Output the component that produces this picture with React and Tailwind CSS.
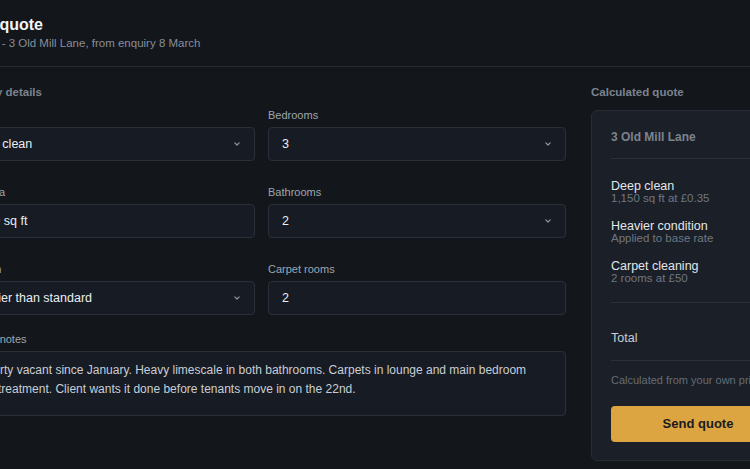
import React from "react";

function Chevron() {
  return (
    <svg width="6" height="4" viewBox="0 0 6 4" fill="none" className="shrink-0">
      <polyline points="0.8,0.8 3,3 5.2,0.8" stroke="#8d95a1" strokeWidth="1.2" strokeLinecap="round" strokeLinejoin="round" />
    </svg>
  );
}

function Field({ label, value, select }) {
  return (
    <div className="flex flex-col">
      <div className="text-[11px] leading-[14px] text-[#9ea6b1] mb-[5px]">{label}</div>
      <div className="h-[34px] flex items-center justify-between pl-[13px] pr-[14px] bg-[#171b23] border border-[#2a2f39] rounded-[4px]">
        <span className="text-[12.5px] text-[#eceef1]">{value}</span>
        {select && <Chevron />}
      </div>
    </div>
  );
}

function LineItem({ name, sub, amount }) {
  return (
    <div className="flex justify-between">
      <div className="flex flex-col">
        <span className="text-[12.5px] leading-[14px] text-[#e3e6ea]">{name}</span>
        <span className="text-[11.5px] leading-[10px] text-[#6f7783]">{sub}</span>
      </div>
      <span className="text-[12.5px] leading-[14px] text-[#e3e6ea]">{amount}</span>
    </div>
  );
}

export default function App() {
  return (
    <div className="w-[750px] h-[469px] overflow-hidden bg-[#13161b] font-['Liberation_Sans',Arial,sans-serif]">
      <div className="w-[890px] -ml-[65px] px-5">
        <header className="pt-[15px] pb-[15px] border-b border-[#262a33]">
          <h1 className="text-[16px] leading-[20px] font-bold text-[#f3f4f6]">Build quote</h1>
          <p className="text-[11.5px] leading-[16px] text-[#878e99]">Jan Hart - 3 Old Mill Lane, from enquiry 8 March</p>
        </header>

        <main className="flex gap-[25px] pt-[18px]">
          <section className="w-[611px] flex flex-col">
            <div className="text-[11.5px] leading-[14px] font-bold text-[#7b838e] mb-[9px]">Property details</div>
            <div className="grid grid-cols-[300px_298px] gap-x-[13px] gap-y-[24px]">
              <Field label="Service" value="Deep clean" select />
              <Field label="Bedrooms" value="3" select />
              <Field label="Floor area" value="1,150 sq ft" />
              <Field label="Bathrooms" value="2" select />
              <Field label="Condition" value="Heavier than standard" select />
              <Field label="Carpet rooms" value="2" />
            </div>
            <div className="mt-[17px] flex flex-col">
              <div className="text-[11px] leading-[14px] text-[#9ea6b1] mb-[5px]">Property notes</div>
              <div className="h-[65px] px-[12px] py-[9px] bg-[#171b23] border border-[#2a2f39] rounded-[4px] text-[12px] leading-[19px] text-[#c9ced6]">
                Property vacant since January. Heavy limescale in both bathrooms. Carpets in lounge and main bedroom need treatment. Client wants it done before tenants move in on the 22nd.
              </div>
            </div>
          </section>

          <aside className="w-[214px] flex flex-col">
            <div className="text-[11.5px] leading-[14px] font-bold text-[#7b838e] mb-[11px]">Calculated quote</div>
            <div className="bg-[#1b1f27] border border-[#262b34] rounded-[6px] px-[19px]">
              <div className="pt-[18px] pb-[13px] border-b border-[#2a2f38] text-[12px] leading-[16px] font-bold text-[#7b838e]">
                3 Old Mill Lane
              </div>
              <div className="pt-[20px] pb-[19px] flex flex-col gap-[16px] border-b border-[#2a2f38]">
                <LineItem name="Deep clean" sub="1,150 sq ft at £0.35" amount="£403" />
                <LineItem name="Heavier condition" sub="Applied to base rate" amount="£60" />
                <LineItem name="Carpet cleaning" sub="2 rooms at £50" amount="£100" />
              </div>
              <div className="h-[58px] flex items-center justify-between pt-[13px] border-b border-[#2a2f38]">
                <span className="text-[12.5px] text-[#c9ced6]">Total</span>
                <span className="text-[12.5px] font-bold text-[#f3f4f6]">£563</span>
              </div>
              <div className="pt-[13px] text-[11px] leading-[13px] text-[#646c78] whitespace-nowrap overflow-hidden">
                Calculated from your own price list.
              </div>
              <button className="mt-[19px] mb-[18px] w-full h-[36px] rounded-[4px] bg-[#dca542] text-[13px] font-bold text-[#1a1b1e]">
                Send quote
              </button>
            </div>
          </aside>
        </main>
      </div>
    </div>
  );
}
